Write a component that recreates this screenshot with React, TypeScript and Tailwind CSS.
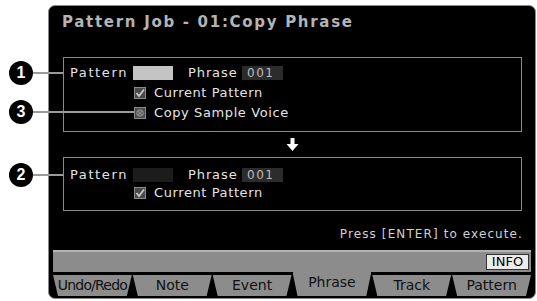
import React from 'react';

const font = { fontFamily: '"DejaVu Sans", "Liberation Sans", sans-serif' };

function Check({ x = false }: { x?: boolean }) {
  return (
    <svg width="12" height="12" viewBox="0 0 12 12" className="shrink-0">
      <rect x="0.5" y="0.5" width="11" height="11" fill="#4a4a4a" stroke="#8a8a8a" />
      {x ? (
        <g stroke="#8a8a8a" strokeWidth="1.2" fill="none">
          <circle cx="6" cy="6" r="3.2" />
          <path d="M4 4 L8 8 M8 4 L4 8" />
        </g>
      ) : (
        <path d="M2.5 6 L5 9 L10 2.5" stroke="#c8c8c8" strokeWidth="1.8" fill="none" />
      )}
    </svg>
  );
}

function PatternRow({ light }: { light: boolean }) {
  return (
    <div className="flex items-center h-[14px]">
      <span className="w-[63px] tracking-[1.6px]">Pattern</span>
      <div className={`w-[40px] h-[14px] ${light ? 'bg-[#c4c4c4]' : 'bg-[#1c1c1c]'}`} />
      <span className="ml-[15px] w-[54px] tracking-[0.9px]">Phrase</span>
      <div className="w-[41px] h-[14px] bg-[#2c2c2c] text-[#bdbdbd] flex items-center pl-[5px] tracking-[1.5px] text-[12px]">
        001
      </div>
    </div>
  );
}

function CheckRow({ label, x }: { label: string; x?: boolean }) {
  return (
    <div className="flex items-center h-[14px] ml-[64px] gap-[8px]">
      <Check x={x} />
      <span className="tracking-[0.6px]">{label}</span>
    </div>
  );
}

function Callout({ n, top, to }: { n: string; top: number; to: string }) {
  return (
    <div className="absolute left-[9px] flex items-center" style={{ top }}>
      <div className="w-[24px] h-[24px] rounded-full bg-black text-white flex items-center justify-center text-[16px] font-bold" style={{ fontFamily: '"Liberation Sans", sans-serif' }}>
        {n}
      </div>
      <div className={`h-[2px] bg-[#9a9a9a] ${to}`} />
    </div>
  );
}

const tabs = ['Undo/Redo', 'Note', 'Event', 'Phrase', 'Track', 'Pattern'];

export default function App() {
  return (
    <div className="relative w-[537px] h-[301px] bg-white overflow-hidden" style={font}>
      <div className="ml-[48px] mt-[5px] w-[488px] h-[294px] bg-black rounded-[7px] border border-[#8a8a8a] flex flex-col text-[#e4e4e4] text-[13px]">
        <div className="pl-[13px] pt-[8px] leading-[16px] text-[15px] font-bold text-[#b4b4b4] tracking-[1.7px]">
          Pattern Job - 01:Copy Phrase
        </div>

        <div className="ml-[14px] mt-[27px] w-[459px] h-[75px] border border-[#8a8a8a] pl-[6px] pt-[8px] flex flex-col gap-[6px]">
          <PatternRow light />
          <CheckRow label="Current Pattern" />
          <CheckRow label="Copy Sample Voice" x />
        </div>

        <div className="h-[25px] flex items-center pl-[237px]">
          <svg width="13" height="13" viewBox="0 0 13 13">
            <path d="M4.5 0 H8.5 V6 H12.5 L6.5 13 L0.5 6 H4.5 Z" fill="#fff" />
          </svg>
        </div>

        <div className="ml-[14px] w-[459px] h-[54px] border border-[#8a8a8a] pl-[6px] pt-[10px] flex flex-col gap-[4px]">
          <PatternRow light={false} />
          <CheckRow label="Current Pattern" />
        </div>

        <div className="mt-[15px] h-[16px] pr-[12px] flex items-center justify-end text-[12px] text-[#d0d0d0] tracking-[1.1px]">
          Press [ENTER] to execute.
        </div>

        <div className="mt-[8px] mx-[4px] mb-[2px] flex-1 flex flex-col bg-[#8c8c8c] border-t-2 border-[#b4b4b4]">
          <div className="h-[20px] flex items-center justify-end pr-[2px]">
            <div className="h-[16px] w-[43px] bg-[#ececec] border border-[#333] text-black text-[13px] flex items-center justify-center">
              INFO
            </div>
          </div>
          <div className="flex-1 grid grid-cols-6 bg-black gap-x-[1px]">
            {tabs.map((t) => {
              const sel = t === 'Phrase';
              return (
                <div
                  key={t}
                  className={`flex items-center justify-center text-[#111] bg-[#8c8c8c] [clip-path:polygon(0_0,100%_0,calc(100%_-_5px)_100%,5px_100%)] ${
                    sel ? 'text-[14px] mt-0 pb-[3px]' : 'text-[14px] mt-[3px]'
                  } ${t === 'Undo/Redo' ? 'tracking-[-0.8px] text-[13px]' : ''}`}
                >
                  {t}
                </div>
              );
            })}
          </div>
        </div>
      </div>

      <Callout n="1" top={61} to="w-[30px]" />
      <Callout n="3" top={100} to="w-[101px]" />
      <Callout n="2" top={163} to="w-[30px]" />
    </div>
  );
}
